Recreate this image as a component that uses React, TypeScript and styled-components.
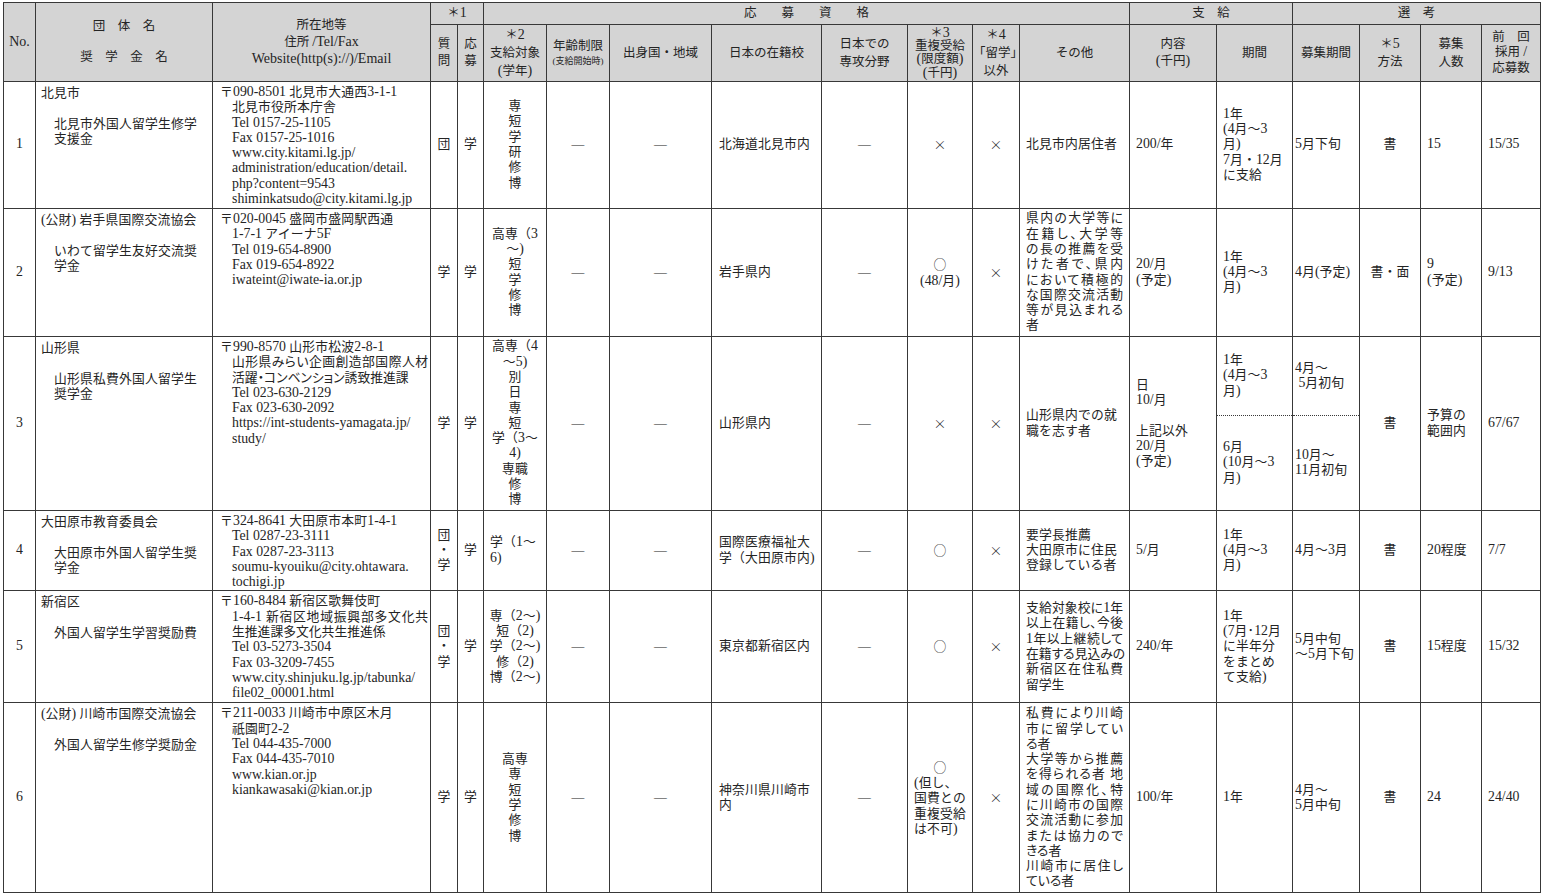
import React from "react";
import styled, { createGlobalStyle } from "styled-components";

const GlobalStyle = createGlobalStyle`
  body {
    margin: 0;
    background: #fff;
    color: #242424;
    font-family: "Liberation Serif", "Noto Sans CJK JP", serif;
  }
`;

const widths = [32, 177, 218, 27, 26, 63, 63, 102, 110, 86, 65, 47, 110, 87, 76, 67, 61, 61, 59];
const line = "#383838";

const Page = styled.div`
  padding: 2px 0 0 3px;
`;

const Table = styled.table`
  border-collapse: collapse;
  table-layout: fixed;
  width: 1537px;
`;

const Col = styled.col<{ $w: number }>`
  width: ${(p) => p.$w}px;
`;

const Row = styled.tr<{ $h: number }>`
  height: ${(p) => p.$h}px;
`;

// Latin runs are set a little larger, like the Century face of the original
const Latin = styled.span`
  font-size: 1.08em;
  line-height: 1;
  letter-spacing: 0;
`;

const m = (s: string): React.ReactNode =>
  s
    .split(/([\x21-\x7e](?:[\x20-\x7e]*[\x21-\x7e])?)/)
    .map((part, i) => (i % 2 === 1 ? <Latin key={i}>{part}</Latin> : part));

const Th = styled.th<{ $lh?: number }>`
  background: #d4d4d4;
  border: 1px solid ${line};
  padding: 0;
  font-weight: normal;
  font-size: 12.5px;
  line-height: ${(p) => p.$lh ?? 17}px;
  text-align: center;
  vertical-align: middle;
  white-space: pre;

  ${Latin} {
    font-size: 1.12em;
  }
`;

const Small = styled.span`
  display: block;
  font-size: 9px;
  line-height: 13px;
`;

const Td = styled.td<{ $split?: "top" | "bottom" }>`
  border: 1px solid ${line};
  ${(p) => p.$split === "top" && `border-bottom: 1px dotted ${line};`}
  ${(p) => p.$split === "bottom" && `border-top: 1px dotted ${line};`}
  padding: 1px 5px;
  font-size: 12.8px;
  line-height: 15.3px;
  letter-spacing: 0.2px;
  text-align: left;
  vertical-align: middle;
  white-space: pre;
  overflow: hidden;
`;

const NoCell = styled(Td)`
  text-align: center;
  padding: 0;
`;

const NameCell = styled(Td)`
  vertical-align: top;
  padding: 4px 2px 0 5px;
`;

const AddrCell = styled(Td)`
  vertical-align: top;
  padding: 3px 2px 0 7px;
`;

const Mark = styled(Td)`
  text-align: center;
  padding: 0;
`;

const Target = styled(Td)<{ $left?: boolean }>`
  text-align: ${(p) => (p.$left ? "left" : "center")};
  padding: ${(p) => (p.$left ? "1px 1px 1px 6px" : "1px")};
`;

const School = styled(Td)`
  padding-left: 7px;
`;

const Note = styled(Td)`
  padding: 1px 6px 1px 6px;
`;

const Info = styled(Td)`
  padding-left: 6px;
`;

const Recruit = styled(Td)`
  padding: 1px 1px 1px 2px;
`;

const Sym = styled.span`
  font-family: "Noto Sans CJK JP", sans-serif;
  font-weight: 300;
`;

const Org = styled.div``;

const Scholarship = styled.div`
  margin-top: 15.3px;
  padding-left: 13px;
`;

const AddrRest = styled.div`
  padding-left: 12px;
`;

const JLine = styled.span`
  display: block;
  white-space: nowrap;
  text-align: justify;
  text-align-last: justify;
  letter-spacing: 0;
  font-feature-settings: "palt";
`;

const LastLine = styled.span`
  display: block;
  white-space: nowrap;
  letter-spacing: 0;
  font-feature-settings: "palt";
`;

const Boxed = styled.span`
  display: inline-block;
  text-align: left;
`;

const Paragraphs = ({ groups }: { groups: string[][] }) => (
  <>
    {groups.map((g, gi) =>
      g.map((text, i) =>
        i < g.length - 1 ? (
          <JLine key={`${gi}-${i}`}>{m(text)}</JLine>
        ) : (
          <LastLine key={`${gi}-${i}`}>{m(text)}</LastLine>
        )
      )
    )}
  </>
);

const Header = () => (
  <thead>
    <Row $h={22}>
      <Th rowSpan={2}>{m("No.")}</Th>
      <Th rowSpan={2} $lh={15.5}>{"団　体　名\n\n奨　学　金　名"}</Th>
      <Th rowSpan={2}>{m("所在地等\n住所 /Tel/Fax\nWebsite(http(s)://)/Email")}</Th>
      <Th colSpan={2}>{m("＊1")}</Th>
      <Th colSpan={8}>応　　募　　資　　格</Th>
      <Th colSpan={2}>支　給</Th>
      <Th colSpan={4}>選　考</Th>
    </Row>
    <Row $h={57}>
      <Th>{"質\n問"}</Th>
      <Th>{"応\n募"}</Th>
      <Th $lh={18}>{m("＊2\n支給対象\n(学年)")}</Th>
      <Th>
        年齢制限
        <Small>(支給開始時)</Small>
      </Th>
      <Th>出身国・地域</Th>
      <Th>日本の在籍校</Th>
      <Th $lh={18}>{"日本での\n専攻分野"}</Th>
      <Th $lh={12.3}>{m("＊3\n重複受給\n(限度額)\n(千円)")}</Th>
      <Th $lh={18}>{m("＊4\n「留学」\n以外")}</Th>
      <Th>その他</Th>
      <Th>{m("内容\n(千円)")}</Th>
      <Th>期間</Th>
      <Th>募集期間</Th>
      <Th $lh={18}>{m("＊5\n方法")}</Th>
      <Th $lh={18}>{"募集\n人数"}</Th>
      <Th $lh={15.5}>{m("前　回\n採用 /\n応募数")}</Th>
    </Row>
  </thead>
);

const App = () => (
  <Page>
    <GlobalStyle />
    <Table>
      <colgroup>
        {widths.map((w, i) => (
          <Col key={i} $w={w} />
        ))}
      </colgroup>
      <Header />
      <tbody>
        <Row $h={127}>
          <NoCell>{m("1")}</NoCell>
          <NameCell>
            <Org>北見市</Org>
            <Scholarship>{"北見市外国人留学生修学\n支援金"}</Scholarship>
          </NameCell>
          <AddrCell>
            <div>{m("〒090-8501 北見市大通西3-1-1")}</div>
            <AddrRest>
              {m("北見市役所本庁舎\nTel 0157-25-1105\nFax 0157-25-1016\nwww.city.kitami.lg.jp/\nadministration/education/detail.\nphp?content=9543\nshiminkatsudo@city.kitami.lg.jp")}
            </AddrRest>
          </AddrCell>
          <Mark>団</Mark>
          <Mark>学</Mark>
          <Target>{"専\n短\n学\n研\n修\n博"}</Target>
          <Mark>—</Mark>
          <Mark>—</Mark>
          <School>北海道北見市内</School>
          <Mark>—</Mark>
          <Mark><Sym>×</Sym></Mark>
          <Mark><Sym>×</Sym></Mark>
          <Note>北見市内居住者</Note>
          <Info>{m("200/年")}</Info>
          <Info>{m("1年\n(4月～3\n月)\n7月・12月\nに支給")}</Info>
          <Recruit>{m("5月下旬")}</Recruit>
          <Mark>書</Mark>
          <Info>{m("15")}</Info>
          <Info>{m("15/35")}</Info>
        </Row>

        <Row $h={128}>
          <NoCell>{m("2")}</NoCell>
          <NameCell>
            <Org>{m("(公財) 岩手県国際交流協会")}</Org>
            <Scholarship>{"いわて留学生友好交流奨\n学金"}</Scholarship>
          </NameCell>
          <AddrCell>
            <div>{m("〒020-0045 盛岡市盛岡駅西通")}</div>
            <AddrRest>
              {m("1-7-1 アイーナ5F\nTel 019-654-8900\nFax 019-654-8922\niwateint@iwate-ia.or.jp")}
            </AddrRest>
          </AddrCell>
          <Mark>学</Mark>
          <Mark>学</Mark>
          <Target>{m("高専（3\n～)\n短\n学\n修\n博")}</Target>
          <Mark>—</Mark>
          <Mark>—</Mark>
          <School>岩手県内</School>
          <Mark>—</Mark>
          <Mark>
            <Sym>○</Sym>
            {"\n"}
            {m("(48/月)")}
          </Mark>
          <Mark><Sym>×</Sym></Mark>
          <Note>
            <Paragraphs
              groups={[
                [
                  "県内の大学等に",
                  "在籍し、大学等",
                  "の長の推薦を受",
                  "けた者で、県内",
                  "において積極的",
                  "な国際交流活動",
                  "等が見込まれる",
                  "者",
                ],
              ]}
            />
          </Note>
          <Info>{m("20/月\n(予定)")}</Info>
          <Info>{m("1年\n(4月～3\n月)")}</Info>
          <Recruit>{m("4月(予定)")}</Recruit>
          <Mark>書・面</Mark>
          <Info>{m("9\n(予定)")}</Info>
          <Info>{m("9/13")}</Info>
        </Row>

        <Row $h={79}>
          <NoCell rowSpan={2}>{m("3")}</NoCell>
          <NameCell rowSpan={2}>
            <Org>山形県</Org>
            <Scholarship>{"山形県私費外国人留学生\n奨学金"}</Scholarship>
          </NameCell>
          <AddrCell rowSpan={2}>
            <div>{m("〒990-8570 山形市松波2-8-1")}</div>
            <AddrRest>
              <JLine>山形県みらい企画創造部国際人材</JLine>
              <LastLine>活躍・コンベンション誘致推進課</LastLine>
              {m("Tel 023-630-2129\nFax 023-630-2092\nhttps://int-students-yamagata.jp/\nstudy/")}
            </AddrRest>
          </AddrCell>
          <Mark rowSpan={2}>学</Mark>
          <Mark rowSpan={2}>学</Mark>
          <Target rowSpan={2}>{m("高専（4\n～5)\n別\n日\n専\n短\n学（3～\n4)\n専職\n修\n博")}</Target>
          <Mark rowSpan={2}>—</Mark>
          <Mark rowSpan={2}>—</Mark>
          <School rowSpan={2}>山形県内</School>
          <Mark rowSpan={2}>—</Mark>
          <Mark rowSpan={2}><Sym>×</Sym></Mark>
          <Mark rowSpan={2}><Sym>×</Sym></Mark>
          <Note rowSpan={2}>{"山形県内での就\n職を志す者"}</Note>
          <Info rowSpan={2}>{m("日\n10/月\n\n上記以外\n20/月\n(予定)")}</Info>
          <Info $split="top">{m("1年\n(4月～3\n月)")}</Info>
          <Recruit $split="top">{m("4月～\n 5月初旬")}</Recruit>
          <Mark rowSpan={2}>書</Mark>
          <Info rowSpan={2}>{"予算の\n範囲内"}</Info>
          <Info rowSpan={2}>{m("67/67")}</Info>
        </Row>
        <Row $h={95}>
          <Info $split="bottom">{m("6月\n(10月～3\n月)")}</Info>
          <Recruit $split="bottom">{m("10月～\n11月初旬")}</Recruit>
        </Row>

        <Row $h={80}>
          <NoCell>{m("4")}</NoCell>
          <NameCell>
            <Org>大田原市教育委員会</Org>
            <Scholarship>{"大田原市外国人留学生奨\n学金"}</Scholarship>
          </NameCell>
          <AddrCell>
            <div>{m("〒324-8641 大田原市本町1-4-1")}</div>
            <AddrRest>
              {m("Tel 0287-23-3111\nFax 0287-23-3113\nsoumu-kyouiku@city.ohtawara.\ntochigi.jp")}
            </AddrRest>
          </AddrCell>
          <Mark>{"団\n・\n学"}</Mark>
          <Mark>学</Mark>
          <Target $left>{m("学（1～\n6)")}</Target>
          <Mark>—</Mark>
          <Mark>—</Mark>
          <School>{m("国際医療福祉大\n学（大田原市内)")}</School>
          <Mark>—</Mark>
          <Mark><Sym>○</Sym></Mark>
          <Mark><Sym>×</Sym></Mark>
          <Note>{"要学長推薦\n大田原市に住民\n登録している者"}</Note>
          <Info>{m("5/月")}</Info>
          <Info>{m("1年\n(4月～3\n月)")}</Info>
          <Recruit>{m("4月～3月")}</Recruit>
          <Mark>書</Mark>
          <Info>{m("20程度")}</Info>
          <Info>{m("7/7")}</Info>
        </Row>

        <Row $h={112}>
          <NoCell>{m("5")}</NoCell>
          <NameCell>
            <Org>新宿区</Org>
            <Scholarship>外国人留学生学習奨励費</Scholarship>
          </NameCell>
          <AddrCell>
            <div>{m("〒160-8484 新宿区歌舞伎町")}</div>
            <AddrRest>
              <JLine>{m("1-4-1 新宿区地域振興部多文化共")}</JLine>
              <LastLine>生推進課多文化共生推進係</LastLine>
              {m("Tel 03-5273-3504\nFax 03-3209-7455\nwww.city.shinjuku.lg.jp/tabunka/\nfile02_00001.html")}
            </AddrRest>
          </AddrCell>
          <Mark>{"団\n・\n学"}</Mark>
          <Mark>学</Mark>
          <Target>{m("専（2～)\n短（2)\n学（2～)\n修（2)\n博（2～)")}</Target>
          <Mark>—</Mark>
          <Mark>—</Mark>
          <School>東京都新宿区内</School>
          <Mark>—</Mark>
          <Mark><Sym>○</Sym></Mark>
          <Mark><Sym>×</Sym></Mark>
          <Note>
            <Paragraphs
              groups={[
                [
                  "支給対象校に1年",
                  "以上在籍し、今後",
                  "1年以上継続して",
                  "在籍する見込みの",
                  "新宿区在住私費",
                  "留学生",
                ],
              ]}
            />
          </Note>
          <Info>{m("240/年")}</Info>
          <Info>{m("1年\n(7月･12月\nに半年分\nをまとめ\nて支給)")}</Info>
          <Recruit>{m("5月中旬\n～5月下旬")}</Recruit>
          <Mark>書</Mark>
          <Info>{m("15程度")}</Info>
          <Info>{m("15/32")}</Info>
        </Row>

        <Row $h={190}>
          <NoCell>{m("6")}</NoCell>
          <NameCell>
            <Org>{m("(公財) 川崎市国際交流協会")}</Org>
            <Scholarship>外国人留学生修学奨励金</Scholarship>
          </NameCell>
          <AddrCell>
            <div>{m("〒211-0033 川崎市中原区木月")}</div>
            <AddrRest>
              {m("祇園町2-2\nTel 044-435-7000\nFax 044-435-7010\nwww.kian.or.jp\nkiankawasaki@kian.or.jp")}
            </AddrRest>
          </AddrCell>
          <Mark>学</Mark>
          <Mark>学</Mark>
          <Target>{"高専\n専\n短\n学\n修\n博"}</Target>
          <Mark>—</Mark>
          <Mark>—</Mark>
          <School>{"神奈川県川崎市\n内"}</School>
          <Mark>—</Mark>
          <Mark>
            <Sym>○</Sym>
            {"\n"}
            <Boxed>{m("(但し、\n国費との\n重複受給\nは不可)")}</Boxed>
          </Mark>
          <Mark><Sym>×</Sym></Mark>
          <Note>
            <Paragraphs
              groups={[
                ["私費により川崎", "市に留学してい", "る者"],
                [
                  "大学等から推薦",
                  "を得られる者 地",
                  "域の国際化、特",
                  "に川崎市の国際",
                  "交流活動に参加",
                  "または協力ので",
                  "きる者",
                ],
                ["川崎市に居住し", "ている者"],
              ]}
            />
          </Note>
          <Info>{m("100/年")}</Info>
          <Info>{m("1年")}</Info>
          <Recruit>{m("4月～\n5月中旬")}</Recruit>
          <Mark>書</Mark>
          <Info>{m("24")}</Info>
          <Info>{m("24/40")}</Info>
        </Row>
      </tbody>
    </Table>
  </Page>
);

export default App;
